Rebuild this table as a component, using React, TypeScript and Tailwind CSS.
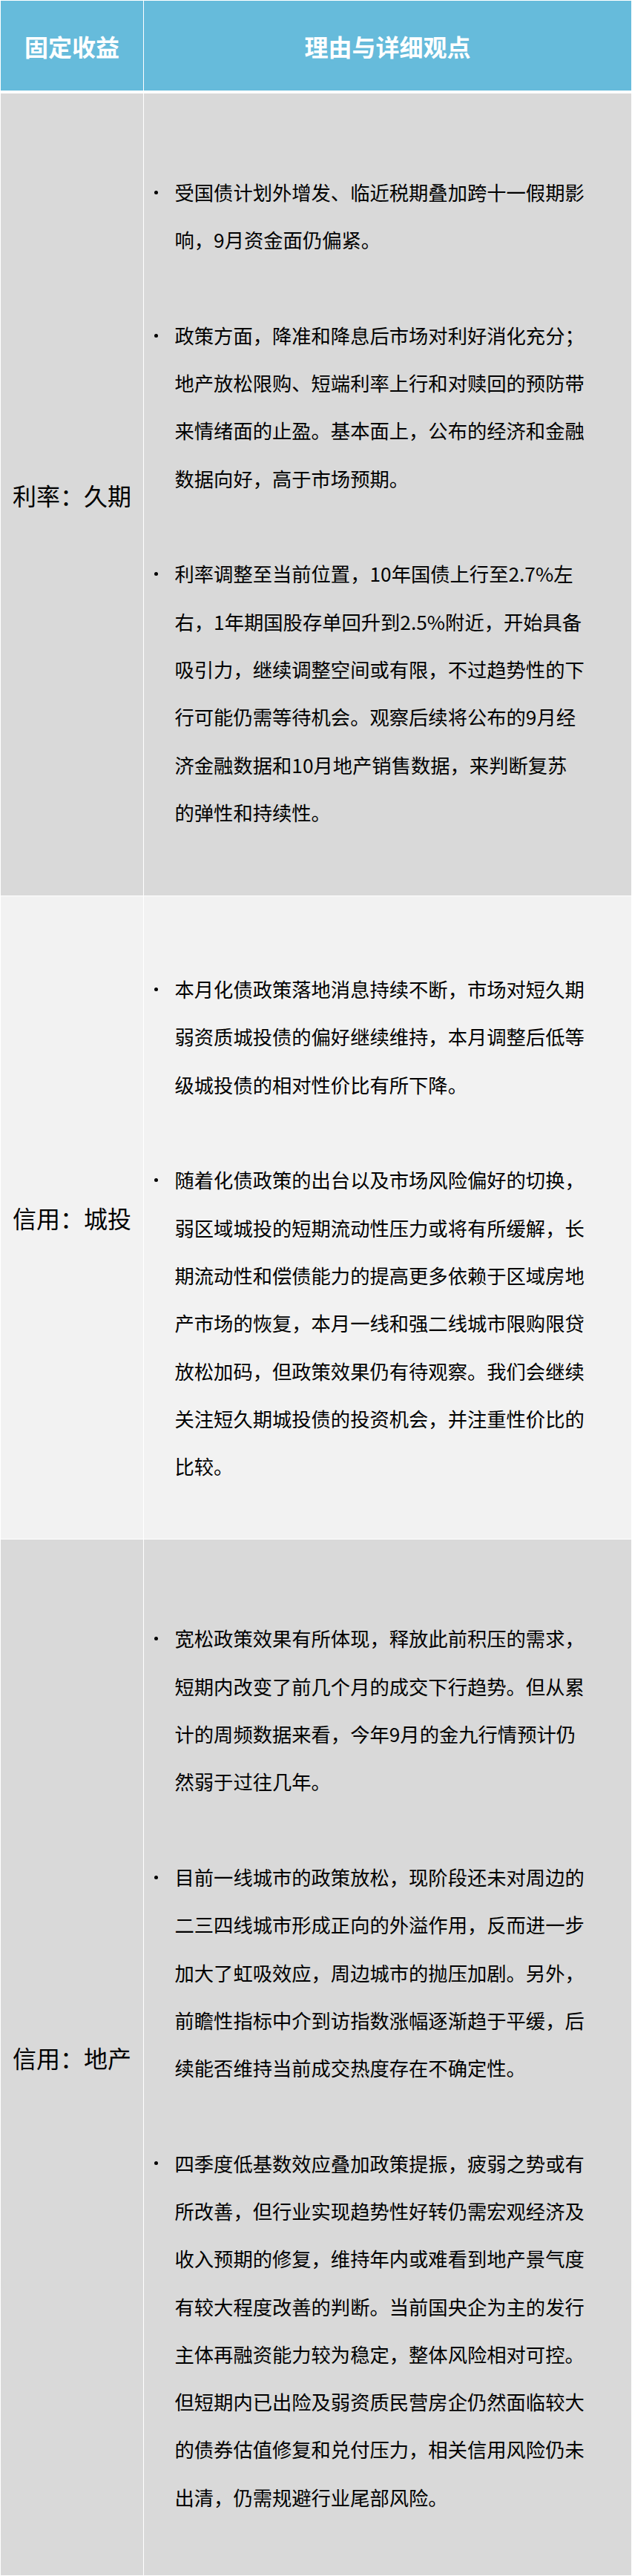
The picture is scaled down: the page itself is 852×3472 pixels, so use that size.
const rows = [
  {
    label: '利率：久期',
    bg: 'bg-[#d9d9d9]',
    pad: 'pt-[101px] pb-[80px]',
    paras: [
      ['受国债计划外增发、临近税期叠加跨十一假期影', '响，9月资金面仍偏紧。'],
      [
        '政策方面，降准和降息后市场对利好消化充分；',
        '地产放松限购、短端利率上行和对赎回的预防带',
        '来情绪面的止盈。基本面上，公布的经济和金融',
        '数据向好，高于市场预期。',
      ],
      [
        '利率调整至当前位置，10年国债上行至2.7%左',
        '右，1年期国股存单回升到2.5%附近，开始具备',
        '吸引力，继续调整空间或有限，不过趋势性的下',
        '行可能仍需等待机会。观察后续将公布的9月经',
        '济金融数据和10月地产销售数据，来判断复苏',
        '的弹性和持续性。',
      ],
    ],
  },
  {
    label: '信用：城投',
    bg: 'bg-[#f2f2f2]',
    pad: 'pt-[93px] pb-[66px]',
    paras: [
      [
        '本月化债政策落地消息持续不断，市场对短久期',
        '弱资质城投债的偏好继续维持，本月调整后低等',
        '级城投债的相对性价比有所下降。',
      ],
      [
        '随着化债政策的出台以及市场风险偏好的切换，',
        '弱区域城投的短期流动性压力或将有所缓解，长',
        '期流动性和偿债能力的提高更多依赖于区域房地',
        '产市场的恢复，本月一线和强二线城市限购限贷',
        '放松加码，但政策效果仍有待观察。我们会继续',
        '关注短久期城投债的投资机会，并注重性价比的',
        '比较。',
      ],
    ],
  },
  {
    label: '信用：地产',
    bg: 'bg-[#d9d9d9]',
    pad: 'pt-[101px] pb-[73px]',
    paras: [
      [
        '宽松政策效果有所体现，释放此前积压的需求，',
        '短期内改变了前几个月的成交下行趋势。但从累',
        '计的周频数据来看，今年9月的金九行情预计仍',
        '然弱于过往几年。',
      ],
      [
        '目前一线城市的政策放松，现阶段还未对周边的',
        '二三四线城市形成正向的外溢作用，反而进一步',
        '加大了虹吸效应，周边城市的抛压加剧。另外，',
        '前瞻性指标中介到访指数涨幅逐渐趋于平缓，后',
        '续能否维持当前成交热度存在不确定性。',
      ],
      [
        '四季度低基数效应叠加政策提振，疲弱之势或有',
        '所改善，但行业实现趋势性好转仍需宏观经济及',
        '收入预期的修复，维持年内或难看到地产景气度',
        '有较大程度改善的判断。当前国央企为主的发行',
        '主体再融资能力较为稳定，整体风险相对可控。',
        '但短期内已出险及弱资质民营房企仍然面临较大',
        '的债券估值修复和兑付压力，相关信用风险仍未',
        '出清，仍需规避行业尾部风险。',
      ],
    ],
  },
];

const font = "font-['Noto_Sans_CJK_SC','Noto_Sans',sans-serif]";

export default function App() {
  return (
    <div className={`w-[852px] bg-white p-[1px] flex flex-col ${font}`}>
      {/* header */}
      <div className="grid grid-cols-[192px_1fr] gap-x-[1px] h-[121px] mb-[4px]">
        <div className="bg-[#66bbdb] flex items-center justify-center text-white font-bold text-[32px]">
          固定收益
        </div>
        <div className="bg-[#66bbdb] flex items-center justify-center text-white font-bold text-[32px]">
          理由与详细观点
        </div>
      </div>

      {rows.map((row, i) => (
        <div
          key={row.label}
          className={`grid grid-cols-[192px_1fr] gap-x-[1px] ${i > 0 ? 'mt-[1px]' : ''}`}
        >
          <div className={`${row.bg} flex items-center justify-center text-black text-[32px]`}>
            {row.label}
          </div>
          <div className={`${row.bg} ${row.pad} text-black text-[26.3px] leading-[64.3px]`}>
            {row.paras.map((lines, j) => (
              <div key={j} className={`flex ${j > 0 ? 'mt-[64.3px]' : ''}`}>
                <div className="w-[41.5px] shrink-0 h-[64.3px] flex items-center">
                  <span className="ml-[14px] w-[5px] h-[5px] rounded-full bg-black" />
                </div>
                <div className="whitespace-nowrap">
                  {lines.map((l, k) => (
                    <div key={k}>{l}</div>
                  ))}
                </div>
              </div>
            ))}
          </div>
        </div>
      ))}
    </div>
  );
}
